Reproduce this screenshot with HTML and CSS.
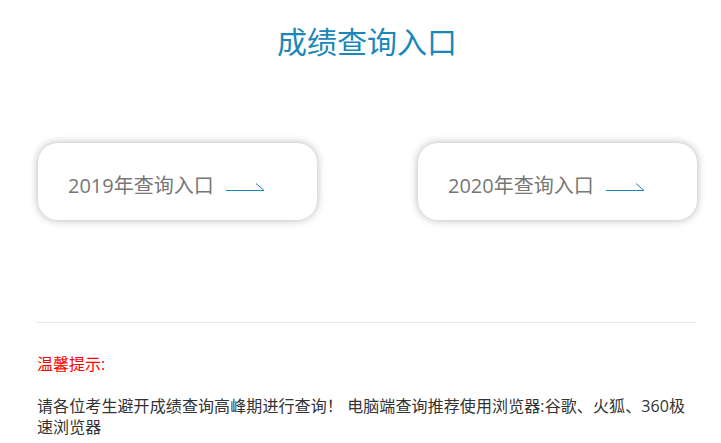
FILE: index.html
```html
<!DOCTYPE html>
<html lang="zh-CN">
<head>
    <meta charset="UTF-8">
    <meta name="viewport" content="width=device-width, initial-scale=1.0">
    <title>成绩查询入口</title>
    <link rel="stylesheet" href="styles.css">
</head>
<body>
    <div id="main-container">
        <h1 class="title">成绩查询入口</h1>
        <div class="entry-row">
            <a class="entry-card" href="#">
                <span class="entry-text">2019年查询入口</span>
                <svg class="entry-arrow" width="40" height="10" viewBox="0 0 40 10"><path d="M0 8.5H38M30 1.5L38 8.5" fill="none" stroke="#1a87b8" stroke-width="1"/></svg>
            </a>
            <a class="entry-card" href="#">
                <span class="entry-text">2020年查询入口</span>
                <svg class="entry-arrow" width="40" height="10" viewBox="0 0 40 10"><path d="M0 8.5H38M30 1.5L38 8.5" fill="none" stroke="#1a87b8" stroke-width="1"/></svg>
            </a>
        </div>
        <hr class="divider">
        <p class="tip-title">温馨提示:</p>
        <p class="tip-text">请各位考生避开成绩查询高峰期进行查询！ 电脑端查询推荐使用浏览器:谷歌、火狐、360极速浏览器</p>
    </div>
</body>
</html>
```

FILE: styles.css
```css
body {
    margin: 0;
    background: #fff;
    font-family: "Open Sans", "Noto Sans CJK SC", sans-serif;
}
#main-container {
    width: 660px;
    margin-left: 37px;
}
.title {
    margin: 18px 0 0;
    text-align: center;
    font-family: "Noto Sans CJK SC", sans-serif;
    font-size: 30px;
    font-weight: normal;
    line-height: 44px;
    color: #1a87b8;
}
.entry-row {
    display: flex;
    justify-content: space-between;
    margin-top: 81px;
}
.entry-card {
    display: flex;
    align-items: center;
    box-sizing: border-box;
    width: 279px;
    height: 77px;
    padding: 6px 0 0 30px;
    margin-left: 1px;
    border-radius: 20px;
    background: #fff;
    box-shadow: 0 0 8px rgba(0, 0, 0, 0.3);
    text-decoration: none;
}
.entry-text {
    font-size: 20px;
    color: #777;
}
.entry-arrow {
    margin: 4px 0 0 12px;
}
.divider {
    margin: 102px 0 0;
    border: none;
    border-top: 1px solid #e8e8e8;
}
.tip-title {
    margin: 31px 0 0;
    font-size: 16px;
    line-height: 21px;
    color: #f00;
}
.tip-text {
    margin: 21px 0 0;
    font-size: 16px;
    line-height: 21px;
    letter-spacing: 0.1px;
    color: #333;
}
```
